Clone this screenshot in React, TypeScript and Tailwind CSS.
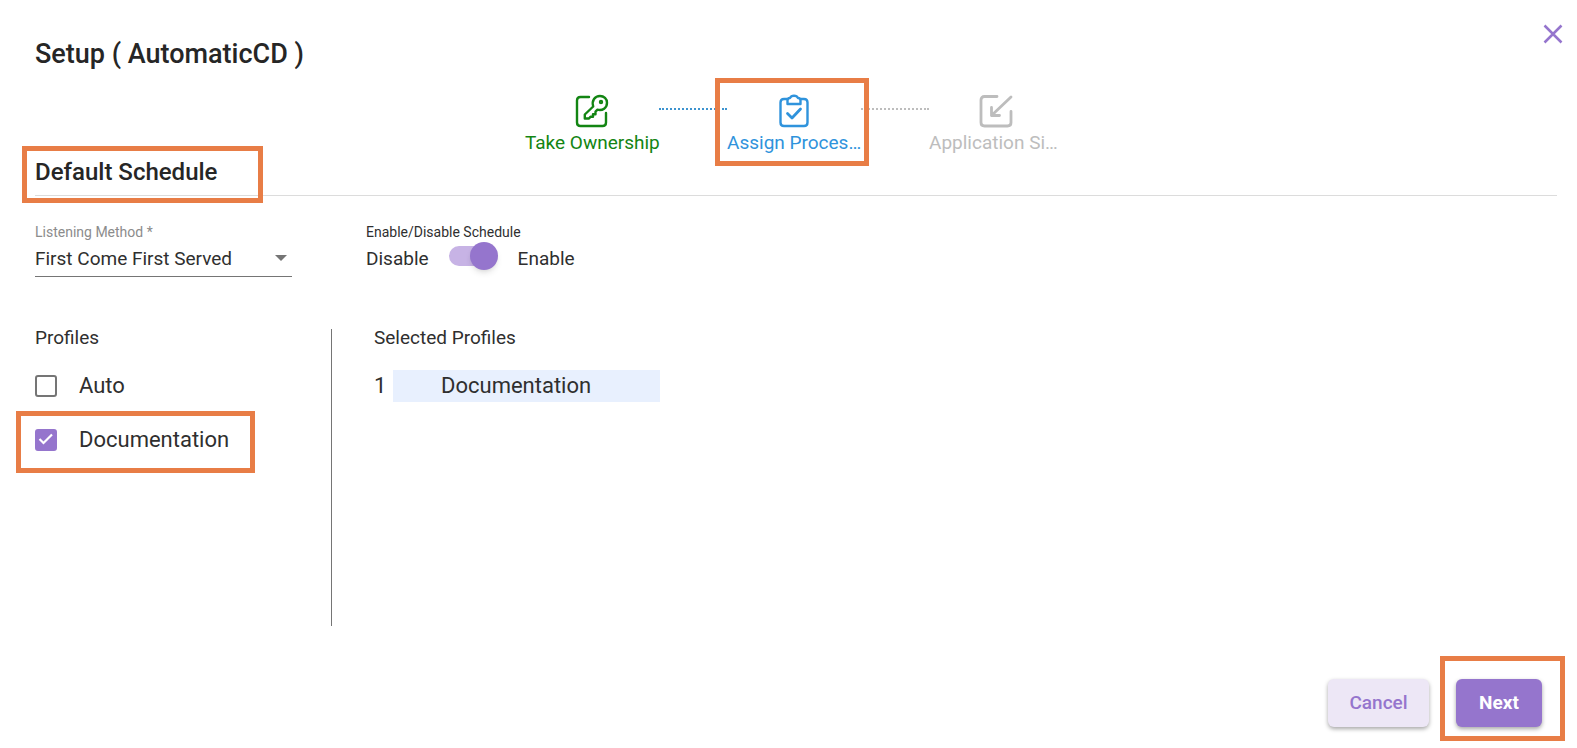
import React, { useState } from "react";

function KeySquareIcon() {
  return (
    <svg className="h-9 w-9" viewBox="0 0 36 36" fill="none" stroke="currentColor" strokeWidth="2.4" strokeLinecap="round" strokeLinejoin="round" aria-hidden="true">
      <path d="M15 4H6.500Q3 4 3 7.500V29.500Q3 33 6.500 33H28.500Q32 33 32 29.500V20" />
      <path d="M19.200 13.500C17.300 7.500 21 3 26 3C30 3 33 6 33 9.800C33 15 28.500 18 23.500 16.700L21.500 18.700V21.200H19V23.700H16.500L15 25.500H10.800V21.500Z" />
      <circle cx="27" cy="9" r="1" />
    </svg>
  );
}

function ClipboardCheckIcon() {
  return (
    <svg className="h-9 w-9" viewBox="0 0 36 36" fill="none" stroke="currentColor" strokeWidth="2.400" strokeLinecap="round" strokeLinejoin="round" aria-hidden="true">
      <path d="M11 6H8Q4.500 6 4.500 9.500V29.500Q4.500 33 8 33H28Q31.500 33 31.500 29.500V9.500Q31.500 6 28 6H25" />
      <path d="M11.500 11V7.500Q11.500 5 14 5Q15 2.800 18 2.800Q21 2.800 22 5Q24.500 5 24.500 7.500V11Z" />
      <path d="M11.500 20.500L16 25L24.500 16" strokeWidth="2.800" />
    </svg>
  );
}

function ArrowSquareIcon() {
  return (
    <svg className="h-9 w-9" viewBox="0 0 36 36" fill="none" stroke="currentColor" strokeWidth="2.800" strokeLinecap="round" strokeLinejoin="round" aria-hidden="true">
      <path d="M19 3.500H6.500Q3 3.500 3 7V29.500Q3 33 6.500 33H29.500Q33 33 33 29.500V18.500" />
      <path d="M33 4L13.500 22.500M13.500 14.500V22.500H21.500" />
    </svg>
  );
}

function Highlight({ className }: { className: string }) {
  return <span aria-hidden="true" className={`pointer-events-none absolute border-[5px] border-[#e87d46] ${className}`} />;
}

function Step({ label, color, children }: { label: string; color: string; children: React.ReactNode }) {
  return (
    <li className={`relative flex w-[134px] flex-col items-center pt-px ${color}`}>
      {children}
      <span className="mt-[2px] w-full text-[19px] leading-6 whitespace-nowrap">{label}</span>
    </li>
  );
}

function ProfileOption({ label, checked, onChange }: { label: string; checked: boolean; onChange: () => void }) {
  return (
    <label className="flex items-center gap-[22px] text-[22px] leading-8">
      <span className="relative flex h-[22px] w-[22px]">
        <input
          type="checkbox"
          checked={checked}
          onChange={onChange}
          className="h-[22px] w-[22px] appearance-none rounded-[3px] border-2 border-[#757575] checked:border-[#9575cd] checked:bg-[#9575cd]"
        />
        {checked && (
          <svg className="pointer-events-none absolute inset-0" viewBox="0 0 22 22" fill="none" stroke="white" strokeWidth="2.200" aria-hidden="true">
            <path d="M4.500 10L8.500 14L17 5.500" />
          </svg>
        )}
      </span>
      {label}
    </label>
  );
}

export default function App() {
  const [profiles, setProfiles] = useState([
    { name: "Auto", selected: false },
    { name: "Documentation", selected: true },
  ]);
  const [enabled, setEnabled] = useState(true);

  const toggle = (name: string) =>
    setProfiles((list) => list.map((p) => (p.name === name ? { ...p, selected: !p.selected } : p)));

  return (
    <main className="flex min-h-screen flex-col bg-white pt-[18px] pr-5 pb-[21px] pl-[35px] font-[Roboto,sans-serif] text-[#2f2f2f]">
      <header className="flex items-start justify-between">
        <h1 className="pt-5 text-[27px] leading-8 font-medium text-[#262626]">Setup ( AutomaticCD )</h1>
        <button type="button" aria-label="Close" className="-mr-3 flex h-8 w-8 items-center justify-center text-[#9575cd]">
          <svg className="h-6 w-6" viewBox="0 0 24 24" stroke="currentColor" strokeWidth="2.500" aria-hidden="true">
            <path d="M3.500 3.500L20.500 20.500M20.500 3.500L3.500 20.500" />
          </svg>
        </button>
      </header>

      <ol className="mt-[22px] flex justify-center pr-1">
        <Step label="Take Ownership" color="text-[#138513]">
          <KeySquareIcon />
        </Step>
        <li aria-hidden="true" className="mt-4 h-0 w-[68px] border-t-2 border-dotted border-[#3d93cf]" />
        <Step label="Assign Proces…" color="text-[#2f93dc]">
          <ClipboardCheckIcon />
          <Highlight className="-top-[14px] -right-2 -left-3 h-[88px]" />
        </Step>
        <li aria-hidden="true" className="mt-4 h-0 w-[68px] border-t-2 border-dotted border-[#bdbdbd]" />
        <Step label="Application Si…" color="text-[#bdbdbd]">
          <ArrowSquareIcon />
        </Step>
      </ol>

      <section className="relative border-b border-[#dcdcdc] pt-px pb-[7px]">
        <h2 className="text-2xl font-medium text-[#262626]">Default Schedule</h2>
        <Highlight className="-bottom-2 -left-[13px] h-[57px] w-[241px]" />
      </section>

      <div className="mt-[26px] flex gap-[74px]">
        <div className="flex w-[257px] flex-col">
          <label htmlFor="method" className="text-sm text-[#8c8c8c]">Listening Method *</label>
          <div className="relative border-b border-[#757575] pt-px pb-px">
            <select id="method" className="block h-8 w-full appearance-none bg-transparent text-[19px]">
              <option>First Come First Served</option>
            </select>
            <svg className="pointer-events-none absolute top-[13px] right-[5px] h-[6px] w-3 fill-[#757575]" viewBox="0 0 12 6" aria-hidden="true">
              <path d="M0 0H12L6 6Z" />
            </svg>
          </div>
        </div>
        <fieldset>
          <legend className="text-sm">Enable/Disable Schedule</legend>
          <div className="flex h-[34px] items-center text-[19px]">
            <span>Disable</span>
            <label className="relative ml-5 flex h-[34px] w-[50px] items-start">
              <input
                type="checkbox"
                role="switch"
                aria-label="Enable schedule"
                checked={enabled}
                onChange={() => setEnabled(!enabled)}
                className="peer mt-1 h-5 w-[46px] appearance-none rounded-full bg-[#bdbdbd] checked:bg-[#c7b3e5]"
              />
              <span className="absolute top-0 left-0 h-7 w-7 rounded-full bg-white shadow-md peer-checked:left-[21px] peer-checked:bg-[#9575cd]" />
            </label>
            <span className="ml-[19px]">Enable</span>
          </div>
        </fieldset>
      </div>

      <div className="mt-[52px] flex grow">
        <section className="w-[297px] border-r border-[#757575]">
          <h3 className="text-[19px] leading-[18px]">Profiles</h3>
          <ul className="mt-[23px] flex flex-col gap-[22px]">
            {profiles.map((p) => (
              <li key={p.name} className="relative">
                <ProfileOption label={p.name} checked={p.selected} onChange={() => toggle(p.name)} />
                {p.selected && <Highlight className="-top-[13px] -left-[19px] h-[62px] w-[239px]" />}
              </li>
            ))}
          </ul>
        </section>
        <section className="pl-[42px]">
          <h3 className="text-[19px] leading-[18px]">Selected Profiles</h3>
          <ol className="mt-[23px] text-[22px] leading-8">
            {profiles.filter((p) => p.selected).map((p, i) => (
              <li key={p.name} className="flex">
                <span className="w-[19px]">{i + 1}</span>
                <span className="w-[267px] bg-[#e8f0fe] pl-12">{p.name}</span>
              </li>
            ))}
          </ol>
        </section>
      </div>

      <footer className="mt-[53px] flex justify-end gap-[27px] pr-[15px] text-[19px] font-medium">
        <button type="button" className="h-12 w-[101px] rounded-md bg-[#ede7f6] text-[#9575cd] shadow-[0_2px_4px_rgba(0,0,0,0.35)]">Cancel</button>
        <span className="relative flex">
          <button type="button" className="h-12 w-[86px] rounded-md bg-[#9575cd] font-bold text-white shadow-[0_2px_4px_rgba(0,0,0,0.35)]">Next</button>
          <Highlight className="-top-[23px] -left-4 h-[85px] w-[125px]" />
        </span>
      </footer>
    </main>
  );
}
